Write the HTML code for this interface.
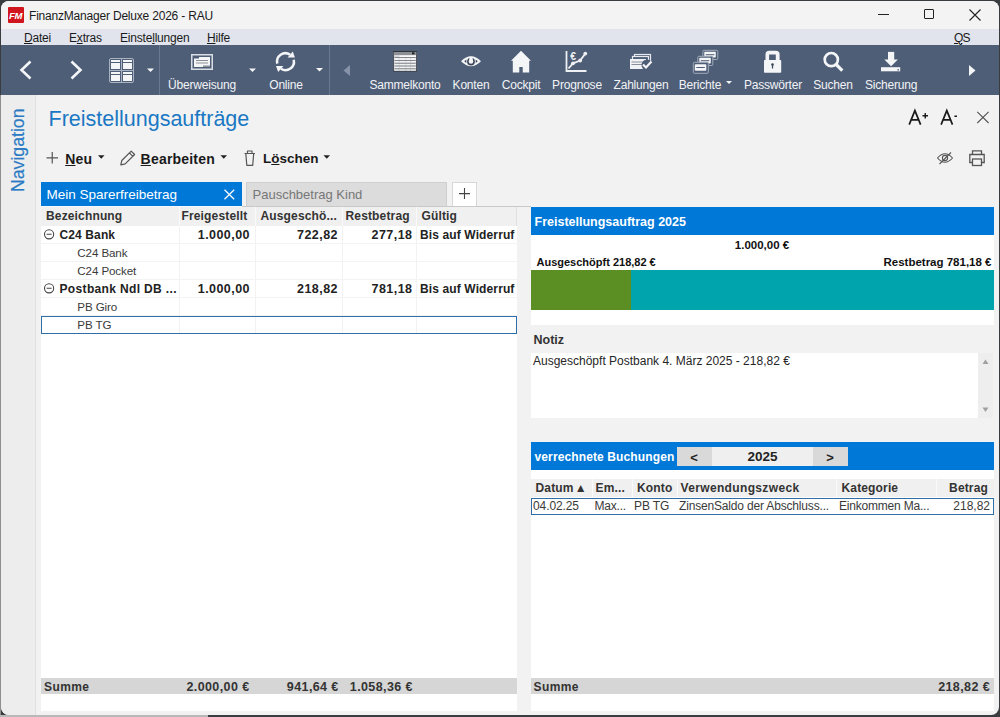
<!DOCTYPE html>
<html><head><meta charset="utf-8">
<style>
*{margin:0;padding:0;box-sizing:border-box}
html,body{width:1000px;height:717px;overflow:hidden;background:#3a3d40;font-family:"Liberation Sans",sans-serif}
.a{position:absolute}
.t{position:absolute;white-space:nowrap;line-height:1}
#win{position:absolute;left:1px;top:1px;width:998px;height:714px;background:#f2f2f2;border-radius:8px;overflow:hidden}
#pg{position:absolute;left:-1px;top:-1px;width:1000px;height:717px}
.tb{color:#f2f3f6;font-size:12px;letter-spacing:-0.2px}
.u{text-decoration:underline;text-decoration-thickness:1px;text-underline-offset:0.5px}
.r{text-align:right}
.hd{font-size:12px;font-weight:700;color:#333;letter-spacing:0.15px}
.rb{font-size:12px;font-weight:700;color:#222;letter-spacing:0.12px}
.nb{font-size:12.5px;font-weight:700;color:#222;letter-spacing:0.45px}
.rr{font-size:11.6px;color:#3a3a3a}
.sb{font-size:12px;font-weight:700;color:#333;letter-spacing:0.4px}
.sn{font-size:12.5px;font-weight:700;color:#333;letter-spacing:0.4px}
.pb{font-size:11.5px;font-weight:700;color:#111}
</style></head><body>
<div class="a" style="left:0;top:95px;width:1px;height:622px;background:#8e8e8e"></div>
<div class="a" style="left:0;top:715px;width:208px;height:2px;background:#b8b8b8"></div>
<div id="win"><div id="pg">
  <!-- title bar -->
  <div class="a" style="left:0;top:0;width:1000px;height:29px;background:#f3f3f3"></div>
  <div class="a" style="left:8px;top:7px;width:16px;height:16px;background:#d0151f;border-radius:1px"></div>
  <div class="t" style="left:9px;top:11px;font-size:9.5px;font-weight:700;font-style:italic;color:#fff;letter-spacing:-0.4px">FM</div>
  <div class="t" style="left:29px;top:10px;font-size:12px;color:#1a1a1a;letter-spacing:-0.2px">FinanzManager Deluxe 2026 - RAU</div>
  <!-- window controls -->
  <div class="a" style="left:878px;top:14px;width:11px;height:1px;background:#222"></div>
  <div class="a" style="left:924px;top:9px;width:10px;height:10px;border:1px solid #222;border-radius:1px"></div>
  <svg class="a" style="left:968px;top:8px" width="14" height="14" viewBox="0 0 14 14"><path d="M1.5 1.5L12.5 12.5M12.5 1.5L1.5 12.5" stroke="#222" stroke-width="1.1"/></svg>
  <!-- menu bar -->
  <div class="a" style="left:0;top:29px;width:1000px;height:16px;background:#e1e4ed"></div>
  <div class="t" style="left:24px;top:31.5px;font-size:12px;letter-spacing:-0.2px;color:#1a1a1a"><span class="u">D</span>atei</div>
  <div class="t" style="left:69px;top:31.5px;font-size:12px;letter-spacing:-0.2px;color:#1a1a1a">E<span class="u">x</span>tras</div>
  <div class="t" style="left:120px;top:31.5px;font-size:12px;letter-spacing:-0.2px;color:#1a1a1a">Einste<span class="u">l</span>lungen</div>
  <div class="t" style="left:207px;top:31.5px;font-size:12px;letter-spacing:-0.2px;color:#1a1a1a"><span class="u">H</span>ilfe</div>
  <div class="t" style="left:954px;top:31.5px;font-size:12px;letter-spacing:-0.9px;color:#1a1a1a"><span class="u">Q</span>S</div>
  <!-- toolbar -->
  <div class="a" style="left:0;top:45px;width:1000px;height:50px;background:#4e5e77"></div>
  <div class="a" style="left:159px;top:45px;width:1px;height:50px;background:#6a7990"></div>
  <div class="a" style="left:329px;top:45px;width:1px;height:50px;background:#6a7990"></div>

  <!-- toolbar icons -->
  <svg class="a" style="left:0;top:45px" width="1000" height="50" viewBox="0 45 1000 50">
    <g fill="none" stroke="#f4f5f7" stroke-width="2.6">
      <polyline points="30.5,61.5 21.5,70 30.5,78.5"/>
      <polyline points="71.5,61.5 80.5,70 71.5,78.5"/>
    </g>
    <!-- grid icon -->
    <rect x="109.5" y="58.5" width="24" height="24" rx="1.5" fill="none" stroke="#aab3c2" stroke-width="1"/>
    <line x1="121.5" y1="58.5" x2="121.5" y2="82.5" stroke="#aab3c2" stroke-width="1"/>
    <line x1="109.5" y1="70.5" x2="133.5" y2="70.5" stroke="#aab3c2" stroke-width="1"/>
    <g fill="#f4f5f7">
      <rect x="111" y="60" width="9" height="2"/><rect x="111" y="63" width="9" height="6"/>
      <rect x="123" y="60" width="9" height="2"/><rect x="123" y="63" width="9" height="6"/>
      <rect x="111" y="72" width="9" height="2"/><rect x="111" y="75" width="9" height="6"/>
      <rect x="123" y="72" width="9" height="2"/><rect x="123" y="75" width="9" height="6"/>
    </g>
    <g fill="#f4f5f7">
      <polygon points="147,68.5 154,68.5 150.5,72"/>
      <polygon points="249,68.5 256,68.5 252.5,72"/>
      <polygon points="316,68 323,68 319.5,71.5"/>
      <polygon points="726,81 732,81 729,84"/>
    </g>
    <!-- Ueberweisung -->
    <rect x="191.75" y="54.75" width="20.5" height="14.5" fill="none" stroke="#d9dee6" stroke-width="1.5"/>
    <rect x="194" y="57" width="16" height="10" fill="#f4f5f7"/>
    <rect x="194" y="57" width="5" height="1.5" fill="#4e5e77"/>
    <rect x="196" y="60" width="12" height="1" fill="#8a8f98"/>
    <rect x="196" y="62.5" width="12" height="1" fill="#8a8f98"/>
    <rect x="203" y="65.5" width="7" height="1.5" fill="#8a8f98"/>
    <!-- Online refresh -->
    <g fill="none" stroke="#f4f5f7" stroke-width="2.5">
      <path d="M277.3 63.6 A8.4 8.4 0 0 1 290 54.6"/>
      <path d="M293.7 59.7 A8.4 8.4 0 0 1 281 68.7"/>
    </g>
    <polygon points="292.8,51.5 287.6,57.6 294.9,57.6" fill="#f4f5f7"/>
    <polygon points="276,66 283.4,66 278.2,72" fill="#f4f5f7"/>
    <!-- left scroll triangle -->
    <polygon points="350,65 350,76 343.5,70.5" fill="#8592a8"/>
    <!-- Sammelkonto spreadsheet -->
    <rect x="393" y="51" width="24" height="20.5" fill="#30343b"/>
    <rect x="393.8" y="52" width="22.4" height="18.8" fill="#d4d6d9"/>
    <rect x="393.8" y="52" width="22.4" height="3" fill="#8d9196"/>
    <rect x="412" y="52.3" width="2.5" height="2" fill="#222"/>
    <rect x="399.5" y="55.5" width="16.5" height="1.8" fill="#fafafa"/>
    <g fill="#f2f3f4">
      <rect x="394.5" y="58" width="4.2" height="2"/><rect x="399.5" y="58" width="6" height="2"/><rect x="406.3" y="58" width="3.8" height="2"/><rect x="410.9" y="58" width="4.8" height="2"/>
      <rect x="394.5" y="60.8" width="4.2" height="2"/><rect x="399.5" y="60.8" width="6" height="2"/><rect x="406.3" y="60.8" width="3.8" height="2"/><rect x="410.9" y="60.8" width="4.8" height="2"/>
      <rect x="394.5" y="63.6" width="4.2" height="2"/><rect x="399.5" y="63.6" width="6" height="2"/><rect x="406.3" y="63.6" width="3.8" height="2"/><rect x="410.9" y="63.6" width="4.8" height="2"/>
      <rect x="394.5" y="66.4" width="4.2" height="2"/><rect x="399.5" y="66.4" width="6" height="2"/><rect x="406.3" y="66.4" width="3.8" height="2"/><rect x="410.9" y="66.4" width="4.8" height="2"/>
      <rect x="394.5" y="69.2" width="4.2" height="1.3"/><rect x="399.5" y="69.2" width="6" height="1.3"/><rect x="406.3" y="69.2" width="3.8" height="1.3"/><rect x="410.9" y="69.2" width="4.8" height="1.3"/>
    </g>
    <g fill="#6d7176">
      <rect x="394.5" y="57.2" width="21.2" height="0.8"/><rect x="394.5" y="60" width="21.2" height="0.8"/><rect x="394.5" y="62.8" width="21.2" height="0.8"/><rect x="394.5" y="65.6" width="21.2" height="0.8"/><rect x="394.5" y="68.4" width="21.2" height="0.8"/>
    </g>
    <!-- Konten eye -->
    <path d="M461 61.3 Q471 51.3 481 61.3 Q471 71.3 461 61.3Z" fill="#f4f5f7"/>
    <circle cx="471" cy="61.6" r="3.9" fill="#3a4558"/>
    <circle cx="471" cy="61.4" r="2.3" fill="#f4f5f7"/>
    <rect x="469.3" y="56.8" width="3.4" height="4" fill="#f4f5f7"/>
    <polygon points="464.3,61.3 466.3,59.6 466.3,63" fill="#3a4558"/>
    <polygon points="477.7,61.3 475.7,59.6 475.7,63" fill="#3a4558"/>
    <!-- Cockpit house -->
    <polygon points="521,50.8 531,60.8 529.2,60.8 529.2,72.4 522.7,72.4 522.7,67 519.3,67 519.3,72.4 512.8,72.4 512.8,60.8 511,60.8" fill="#f4f5f7"/>
    <!-- Prognose chart -->
    <g fill="none" stroke="#eef0f3" stroke-width="1.8">
      <polyline points="566.5,51 566.5,71 586.5,71"/>
      <polyline points="568.5,68.5 573,63.3 580.2,60.5 585.3,53.6"/>
    </g>
    <circle cx="573" cy="63.3" r="1.9" fill="#eef0f3"/><circle cx="580.2" cy="60.5" r="1.9" fill="#eef0f3"/><circle cx="585.3" cy="53.6" r="1.9" fill="#eef0f3"/>
    <text x="570.3" y="60" font-size="10.5" font-weight="700" fill="#eef0f3" font-family="Liberation Sans">€</text>
    <!-- Zahlungen -->
    <rect x="634.5" y="54.5" width="16" height="9" fill="none" stroke="#e6e9ee" stroke-width="1.2"/>
    <rect x="632.5" y="56.5" width="16" height="9" fill="#4e5e77" stroke="#e6e9ee" stroke-width="1.2"/>
    <rect x="630" y="59" width="16" height="10" fill="#f0f2f5"/>
    <rect x="631.5" y="61.5" width="11" height="1" fill="#8a8f98"/><rect x="631.5" y="64" width="11" height="1" fill="#8a8f98"/>
    <circle cx="647" cy="65" r="5.5" fill="#4e5e77"/>
    <polyline points="643,64.5 646,67.5 651.5,61.5" fill="none" stroke="#f4f5f7" stroke-width="2.2"/>
    <!-- Berichte -->
    <rect x="702.8" y="50.3" width="15" height="9.2" rx="1" fill="#4e5e77" stroke="#a3acbb" stroke-width="1"/>
    <rect x="704.3" y="51.8" width="11.5" height="5.8" rx="0.8" fill="#f4f5f7"/><rect x="705.8" y="54.2" width="8.5" height="1" fill="#4e5e77"/>
    <rect x="697.8" y="56.3" width="15" height="9.2" rx="1" fill="#4e5e77" stroke="#a3acbb" stroke-width="1"/>
    <rect x="699.3" y="57.8" width="11.5" height="5.8" rx="0.8" fill="#f4f5f7"/><rect x="700.8" y="60.2" width="8.5" height="1" fill="#4e5e77"/>
    <rect x="693.3" y="62.3" width="15" height="11" rx="1" fill="#4e5e77" stroke="#a3acbb" stroke-width="1"/>
    <rect x="694.8" y="64.3" width="11.5" height="6.4" rx="0.8" fill="#f4f5f7"/><rect x="696.3" y="67" width="8.5" height="1" fill="#4e5e77"/>
    <!-- Lock -->
    <path fill-rule="evenodd" fill="#f4f5f7" d="M769.2 50.8 H775.9 A3.7 3.7 0 0 1 779.6 54.5 V61 H765.5 V54.5 A3.7 3.7 0 0 1 769.2 50.8Z M769.1 54.4 V60.5 H775.8 V54.4Z"/>
    <rect x="764" y="60" width="17.2" height="12.7" rx="0.8" fill="#f4f5f7"/>
    <circle cx="772.5" cy="64.6" r="1.3" fill="#3a4558"/><rect x="771.9" y="64.8" width="1.2" height="3.7" fill="#3a4558"/>
    <!-- Search -->
    <circle cx="831.3" cy="59.6" r="6.6" fill="none" stroke="#f4f5f7" stroke-width="2.7"/>
    <line x1="836.2" y1="64.5" x2="842.3" y2="70.6" stroke="#f4f5f7" stroke-width="3.2"/>
    <!-- Download -->
    <rect x="888" y="51.9" width="6.2" height="8.2" fill="#f4f5f7"/>
    <polygon points="884.3,59.5 897.9,59.5 891.1,66.3" fill="#f4f5f7"/>
    <rect x="881" y="67.2" width="19.2" height="4.1" fill="#f4f5f7"/>
    <rect x="897.4" y="69.2" width="1.6" height="1.3" fill="#4e5e77"/>
    <!-- right scroll triangle -->
    <polygon points="969,65 975.5,70.5 969,76" fill="#f4f5f7"/>
  </svg>
  <div class="t tb" style="left:152px;width:100px;text-align:center;top:79px">Überweisung</div>
  <div class="t tb" style="left:236px;width:100px;text-align:center;top:79px">Online</div>
  <div class="t tb" style="left:355px;width:100px;text-align:center;top:79px">Sammelkonto</div>
  <div class="t tb" style="left:421px;width:100px;text-align:center;top:79px">Konten</div>
  <div class="t tb" style="left:471px;width:100px;text-align:center;top:79px">Cockpit</div>
  <div class="t tb" style="left:527px;width:100px;text-align:center;top:79px">Prognose</div>
  <div class="t tb" style="left:591px;width:100px;text-align:center;top:79px">Zahlungen</div>
  <div class="t tb" style="left:650px;width:100px;text-align:center;top:79px">Berichte</div>
  <div class="t tb" style="left:723px;width:100px;text-align:center;top:79px">Passwörter</div>
  <div class="t tb" style="left:783px;width:100px;text-align:center;top:79px">Suchen</div>
  <div class="t tb" style="left:841px;width:100px;text-align:center;top:79px">Sicherung</div>

  <!-- navigation sidebar -->
  <div class="a" style="left:0;top:95px;width:35px;height:622px;background:#ededed"></div>
  <div class="a" style="left:35px;top:95px;width:1px;height:620px;background:#e0e0e0"></div>
  <div class="t" style="left:8.6px;top:191.8px;font-size:18.5px;color:#2a7bc4;transform-origin:0 0;transform:rotate(-90deg) scaleX(0.955);-webkit-text-stroke:0.2px #2a7bc4">Navigation</div>
  <!-- page title -->
  <div class="t" style="left:48.5px;top:109.2px;font-size:21.5px;color:#1a78c4">Freistellungsaufträge</div>
  <svg class="a" style="left:900px;top:100px" width="100" height="75" viewBox="900 100 100 75">
    <g fill="none" stroke="#1a1a1a" stroke-width="1.7">
      <path d="M909.2 124.6 L914.9 110.6 L920.6 124.6 M911.4 119.8 H918.4"/>
      <path d="M941.1 124.6 L946.8 110.6 L952.5 124.6 M943.3 119.8 H950.3"/>
    </g>
    <g fill="none" stroke="#1a1a1a" stroke-width="1.4">
      <path d="M922.5 115.7 H928 M925.25 113 V118.4"/>
      <path d="M954.4 116.3 H957"/>
    </g>
    <path d="M977.3 111.8 L988.6 123 M988.6 111.8 L977.3 123" stroke="#555" stroke-width="1.1" fill="none"/>
    <!-- eye slash -->
    <path d="M937.5 158 Q945 149.5 952.5 158 Q945 166.5 937.5 158Z" fill="none" stroke="#555" stroke-width="1.1"/>
    <circle cx="945" cy="158" r="2.6" fill="none" stroke="#555" stroke-width="1.1"/>
    <path d="M939.5 164 L951 152.5" stroke="#555" stroke-width="1.1"/>
    <!-- printer -->
    <g fill="none" stroke="#555" stroke-width="1.3">
      <path d="M972.5 154.5 V150.8 H981.5 V154.5"/>
      <path d="M972.5 162.5 H969.8 V154.5 H984.2 V162.5 H981.5"/>
      <rect x="972.5" y="159" width="9" height="6.5"/>
    </g>
  </svg>
  <!-- action bar -->
  <svg class="a" style="left:40px;top:145px" width="300" height="25" viewBox="40 145 300 25">
    <path d="M46.5 157.8 H58 M52.25 152 V163.6" stroke="#555" stroke-width="1.2" fill="none"/>
    <g fill="#222"><polygon points="98,155.3 104.5,155.3 101.25,158.8"/><polygon points="220.5,155.3 227,155.3 223.75,158.8"/><polygon points="323.5,155.3 330,155.3 326.75,158.8"/></g>
    <g fill="none" stroke="#555" stroke-width="1.2" stroke-linejoin="round">
      <path d="M120.8 164.8 L121.8 160.5 L131.2 151.1 L134.6 154.5 L125.2 163.9 Z M129.4 152.9 L132.8 156.3"/>
      <path d="M244.5 153.5 H255 M247.5 153.5 V151 H252 V153.5 M245.8 153.5 L246.8 165.3 H252.7 L253.7 153.5"/>
    </g>
  </svg>
  <div class="t" style="left:65.2px;top:151.5px;font-size:14px;font-weight:700;color:#1a1a1a;letter-spacing:0.2px"><span class="u">N</span>eu</div>
  <div class="t" style="left:140.6px;top:151.5px;font-size:14px;font-weight:700;color:#1a1a1a;letter-spacing:0.2px"><span class="u">B</span>earbeiten</div>
  <div class="t" style="left:263px;top:151.5px;font-size:13.5px;font-weight:700;color:#1a1a1a">L<span class="u">ö</span>schen</div>
  <!-- tabs -->
  <div class="a" style="left:41px;top:182px;width:201px;height:24.5px;background:#0078d7"></div>
  <div class="t" style="left:46.5px;top:187.5px;font-size:13.5px;color:#fff">Mein Sparerfreibetrag</div>
  <svg class="a" style="left:222px;top:187px" width="15" height="15" viewBox="222 187 15 15"><path d="M224.5 189.8 L234.2 199.2 M234.2 189.8 L224.5 199.2" stroke="#fff" stroke-width="1.2"/></svg>
  <div class="a" style="left:246px;top:182px;width:201px;height:24.5px;background:#dcdcdc;border:1px solid #cfcfcf;border-bottom:none"></div>
  <div class="t" style="left:252.5px;top:188px;font-size:13px;color:#777">Pauschbetrag Kind</div>
  <div class="a" style="left:452px;top:182px;width:25px;height:24.5px;background:#fff;border:1px solid #d8d8d8;border-bottom:none"></div>
  <svg class="a" style="left:452px;top:182px" width="25" height="25" viewBox="452 182 25 25"><path d="M459 193.6 H470 M464.5 188.1 V199.1" stroke="#444" stroke-width="1.1"/></svg>
  <div class="a" style="left:242px;top:206px;width:289px;height:1px;background:#c9c9c9"></div>
  <div class="a" style="left:41px;top:206px;width:201px;height:1px;background:#f4f8fc"></div>

  <!-- left grid -->
  <div class="a" style="left:41px;top:207px;width:476px;height:504px;background:#fff"></div>
  <div class="a" style="left:41px;top:207px;width:476px;height:19px;background:#f0f0f0"></div>
  <div class="a" style="left:516px;top:207px;width:1px;height:19px;background:#e0e0e0"></div>
  <!-- column lines -->
  <div class="a" style="left:179px;top:207px;width:1px;height:19px;background:#fafafa"></div>
  <div class="a" style="left:255px;top:207px;width:1px;height:19px;background:#fafafa"></div>
  <div class="a" style="left:342px;top:207px;width:1px;height:19px;background:#fafafa"></div>
  <div class="a" style="left:416px;top:207px;width:1px;height:19px;background:#fafafa"></div>
  <div class="a" style="left:179px;top:226px;width:1px;height:108px;background:#f2f2f2"></div>
  <div class="a" style="left:255px;top:226px;width:1px;height:108px;background:#f2f2f2"></div>
  <div class="a" style="left:342px;top:226px;width:1px;height:108px;background:#f2f2f2"></div>
  <div class="a" style="left:416px;top:226px;width:1px;height:108px;background:#f2f2f2"></div>
  <!-- row lines -->
  <div class="a" style="left:41px;top:243px;width:476px;height:1px;background:#f3f3f3"></div>
  <div class="a" style="left:41px;top:261px;width:476px;height:1px;background:#f3f3f3"></div>
  <div class="a" style="left:41px;top:279px;width:476px;height:1px;background:#f3f3f3"></div>
  <div class="a" style="left:41px;top:297px;width:476px;height:1px;background:#f3f3f3"></div>
  <div class="a" style="left:41px;top:315px;width:476px;height:1px;background:#f3f3f3"></div>
  <!-- selected row -->
  <div class="a" style="left:41px;top:316px;width:476px;height:18px;border:1px solid #2f6ea6"></div>
  <!-- header text -->
  <div class="hd t" style="left:46px;top:210px">Bezeichnung</div>
  <div class="hd t" style="left:181.5px;top:210px">Freigestellt</div>
  <div class="hd t" style="left:260.5px;top:210px">Ausgeschö...</div>
  <div class="hd t" style="left:345.5px;top:210px">Restbetrag</div>
  <div class="hd t" style="left:421.5px;top:210px">Gültig</div>
  <!-- rows -->
  <svg class="a" style="left:40px;top:225px" width="20" height="75" viewBox="40 225 20 75">
    <g fill="none" stroke="#444" stroke-width="1.1"><circle cx="49.1" cy="234.3" r="4.6"/><circle cx="49.1" cy="288.3" r="4.6"/></g>
    <path d="M46.6 234.3 H51.6 M46.6 288.3 H51.6" stroke="#444" stroke-width="1.1"/>
  </svg>
  <div class="rb t" style="left:59.5px;top:229px">C24 Bank</div>
  <div class="nb t r" style="left:150px;width:100px;top:229px">1.000,00</div>
  <div class="nb t r" style="left:238px;width:100px;top:229px">722,82</div>
  <div class="nb t r" style="left:312.5px;width:100px;top:229px">277,18</div>
  <div class="rb t" style="left:420px;top:229px">Bis auf Widerruf</div>
  <div class="rr t" style="left:77.3px;letter-spacing:-0.1px;top:247px">C24 Bank</div>
  <div class="rr t" style="left:77.3px;letter-spacing:-0.1px;top:265px">C24 Pocket</div>
  <div class="rb t" style="left:59.5px;top:283px;letter-spacing:0.35px">Postbank Ndl DB ...</div>
  <div class="nb t r" style="left:150px;width:100px;top:283px">1.000,00</div>
  <div class="nb t r" style="left:238px;width:100px;top:283px">218,82</div>
  <div class="nb t r" style="left:312.5px;width:100px;top:283px">781,18</div>
  <div class="rb t" style="left:420px;top:283px">Bis auf Widerruf</div>
  <div class="rr t" style="left:77.3px;letter-spacing:-0.1px;top:301px">PB Giro</div>
  <div class="rr t" style="left:77.3px;letter-spacing:-0.1px;top:319px">PB TG</div>
  <!-- summe -->
  <div class="a" style="left:41px;top:677.5px;width:476px;height:16.5px;background:#d6d6d6"></div>
  <div class="sb t" style="left:44px;top:680.5px">Summe</div>
  <div class="sn t r" style="left:149.5px;width:100px;top:680.5px">2.000,00 €</div>
  <div class="sn t r" style="left:238.7px;width:100px;top:680.5px">941,64 €</div>
  <div class="sn t r" style="left:312.9px;width:100px;top:680.5px">1.058,36 €</div>

  <!-- right panel -->
  <div class="a" style="left:530.5px;top:207px;width:463.5px;height:27.5px;background:#0078d7"></div>
  <div class="t" style="left:534.5px;top:215.5px;font-size:12.5px;font-weight:700;color:#fff">Freistellungsauftrag 2025</div>
  <div class="a" style="left:530.5px;top:234.5px;width:463.5px;height:90.5px;background:#fff"></div>
  <div class="t pb" style="left:662px;width:200px;text-align:center;top:240px">1.000,00 €</div>
  <div class="t pb" style="left:536.5px;top:256.5px;font-size:11px">Ausgeschöpft 218,82 €</div>
  <div class="t pb r" style="left:791.5px;width:200px;top:256.5px">Restbetrag 781,18 €</div>
  <div class="a" style="left:530.5px;top:269.7px;width:100.5px;height:40px;background:#5b8e23"></div>
  <div class="a" style="left:631px;top:269.7px;width:363px;height:40px;background:#00a4ad"></div>
  <div class="t" style="left:533.5px;top:333.5px;font-size:12.5px;font-weight:700;color:#333">Notiz</div>
  <div class="a" style="left:530.5px;top:352.5px;width:447px;height:65px;background:#fff"></div>
  <div class="a" style="left:977.5px;top:352.5px;width:15px;height:65px;background:#eeeeee"></div>
  <svg class="a" style="left:977px;top:352px" width="17" height="66" viewBox="977 352 17 66"><polygon points="982.5,364 988.5,364 985.5,359.5" fill="#a0a0a0"/><polygon points="982.5,407.5 988.5,407.5 985.5,412" fill="#a0a0a0"/></svg>
  <div class="t" style="left:533px;top:355px;font-size:12px;color:#262626">Ausgeschöpft Postbank 4. März 2025 - 218,82 €</div>
  <!-- buchungen -->
  <div class="a" style="left:530.5px;top:442px;width:463.5px;height:27.8px;background:#0078d7"></div>
  <div class="t" style="left:534.5px;top:451.3px;font-size:12px;font-weight:700;color:#fff;letter-spacing:0.12px">verrechnete Buchungen</div>
  <div class="a" style="left:677px;top:447px;width:170.5px;height:18.6px;background:#efefef"></div>
  <div class="a" style="left:677px;top:447px;width:34.5px;height:18.6px;background:#d9d9d9"></div>
  <div class="a" style="left:812.5px;top:447px;width:35px;height:18.6px;background:#d9d9d9"></div>
  <div class="t" style="left:644px;width:100px;text-align:center;top:450.5px;font-size:13px;font-weight:700;color:#222">&lt;</div>
  <div class="t" style="left:780px;width:100px;text-align:center;top:450.5px;font-size:13px;font-weight:700;color:#222">&gt;</div>
  <div class="t" style="left:712.5px;width:100px;text-align:center;top:450px;font-size:13.5px;font-weight:700;color:#222">2025</div>
  <div class="a" style="left:530.5px;top:469.8px;width:463.5px;height:241.2px;background:#fff"></div>
  <div class="a" style="left:530.5px;top:478.6px;width:463.5px;height:18.5px;background:#f0f0f0"></div>
  <div class="a" style="left:592px;top:478.6px;width:1px;height:18.5px;background:#fafafa"></div>
  <div class="a" style="left:631.5px;top:478.6px;width:1px;height:18.5px;background:#fafafa"></div>
  <div class="a" style="left:676.5px;top:478.6px;width:1px;height:18.5px;background:#fafafa"></div>
  <div class="a" style="left:836px;top:478.6px;width:1px;height:18.5px;background:#fafafa"></div>
  <div class="a" style="left:935.5px;top:478.6px;width:1px;height:18.5px;background:#fafafa"></div>
  <div class="hd t" style="left:535.5px;top:482px">Datum&#8202;▲</div>
  <div class="hd t" style="left:595.5px;top:482px">Em...</div>
  <div class="hd t" style="left:637px;top:482px">Konto</div>
  <div class="hd t" style="left:680.5px;top:482px;letter-spacing:0.35px">Verwendungszweck</div>
  <div class="hd t" style="left:841.5px;top:482px">Kategorie</div>
  <div class="hd t r" style="left:888px;width:100px;top:482px">Betrag</div>
  <div class="a" style="left:531px;top:497.6px;width:462.5px;height:17px;border:1px solid #2f6ea6"></div>
  <div class="rr t" style="left:533px;top:499.5px;font-size:12px;letter-spacing:-0.1px">04.02.25</div>
  <div class="rr t" style="left:594.5px;top:499.5px;font-size:12px;letter-spacing:-0.2px">Max...</div>
  <div class="rr t" style="left:634px;top:499.5px;font-size:12px;letter-spacing:-0.1px">PB TG</div>
  <div class="rr t" style="left:679px;top:499.5px;font-size:12px;letter-spacing:-0.17px">ZinsenSaldo der Abschluss...</div>
  <div class="rr t" style="left:839px;top:499.5px;font-size:12px;letter-spacing:-0.2px">Einkommen Ma...</div>
  <div class="rr t r" style="left:890px;width:100px;top:499.5px;font-size:12px">218,82</div>
  <div class="a" style="left:530.5px;top:677.5px;width:463.5px;height:16.5px;background:#d6d6d6"></div>
  <div class="sb t" style="left:533.5px;top:680.5px">Summe</div>
  <div class="sn t r" style="left:890px;width:100px;top:680.5px">218,82 €</div>
</div></div>
</body></html>
